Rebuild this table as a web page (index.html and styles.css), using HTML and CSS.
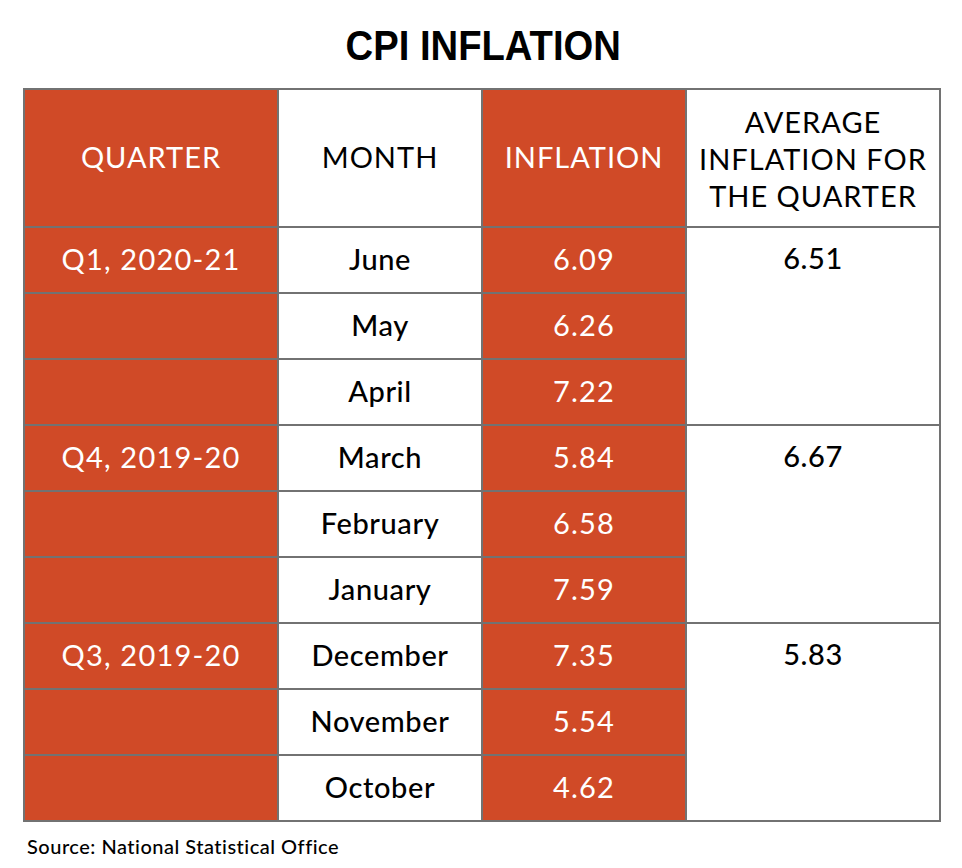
FILE: index.html
```html
<!DOCTYPE html>
<html lang="en">
<head>
<meta charset="utf-8">
<title>CPI Inflation</title>
<link rel="stylesheet" href="styles.css">
</head>
<body>
<main class="page">
  <h1 class="title"><span>CPI INFLATION</span></h1>
  <table class="cpi">
    <colgroup>
      <col class="c-quarter">
      <col class="c-month">
      <col class="c-infl">
      <col class="c-avg">
    </colgroup>
    <thead>
      <tr class="head">
        <th class="orange">QUARTER</th>
        <th>MONTH</th>
        <th class="orange">INFLATION</th>
        <th class="avg-head">AVERAGE<br>INFLATION FOR<br>THE QUARTER</th>
      </tr>
    </thead>
    <tbody>
      <tr>
        <td class="orange">Q1, 2020-21</td>
        <td>June</td>
        <td class="orange">6.09</td>
        <td class="avg" rowspan="3">6.51</td>
      </tr>
      <tr>
        <td class="orange"></td>
        <td>May</td>
        <td class="orange">6.26</td>
      </tr>
      <tr>
        <td class="orange"></td>
        <td>April</td>
        <td class="orange">7.22</td>
      </tr>
      <tr>
        <td class="orange">Q4, 2019-20</td>
        <td>March</td>
        <td class="orange">5.84</td>
        <td class="avg" rowspan="3">6.67</td>
      </tr>
      <tr>
        <td class="orange"></td>
        <td>February</td>
        <td class="orange">6.58</td>
      </tr>
      <tr>
        <td class="orange"></td>
        <td>January</td>
        <td class="orange">7.59</td>
      </tr>
      <tr>
        <td class="orange">Q3, 2019-20</td>
        <td>December</td>
        <td class="orange">7.35</td>
        <td class="avg" rowspan="3">5.83</td>
      </tr>
      <tr>
        <td class="orange"></td>
        <td>November</td>
        <td class="orange">5.54</td>
      </tr>
      <tr>
        <td class="orange"></td>
        <td>October</td>
        <td class="orange">4.62</td>
      </tr>
    </tbody>
  </table>
  <p class="source">Source: National Statistical Office</p>
</main>
</body>
</html>
```

FILE: styles.css
```css
html, body {
  margin: 0;
  padding: 0;
  background: #ffffff;
}

.page {
  width: 962px;
  height: 868px;
  box-sizing: border-box;
  padding: 22px 0 0 0;
  font-family: "Lato", "Liberation Sans", sans-serif;
  color: #000000;
}

.title {
  margin: 0;
  height: 48px;
  line-height: 48px;
  font-family: "Liberation Sans", "Arial", sans-serif;
  font-weight: 700;
  font-size: 42px;
  text-align: center;
  padding-left: 4px;
}

.title span {
  display: inline-block;
  transform: scaleX(0.91);
}

.cpi {
  margin: 18px 0 0 23px;
  border-collapse: collapse;
  table-layout: fixed;
  width: 918px;
}

.c-quarter { width: 254px; }
.c-month { width: 204px; }
.c-infl { width: 204px; }
.c-avg { width: 254px; }

.cpi th,
.cpi td {
  border: 2px solid #727272;
  padding: 0 0 3px 0;
  text-align: center;
  vertical-align: middle;
  font-size: 29px;
  line-height: 34px;
  letter-spacing: 0.6px;
  white-space: nowrap;
}

.cpi th {
  font-weight: 400;
  letter-spacing: 1px;
}

.cpi td {
  font-weight: 500;
}

.cpi td.orange {
  font-weight: 400;
  letter-spacing: 1.2px;
}

.head {
  height: 138px;
}

.cpi tbody tr {
  height: 66px;
}

.orange {
  background: #d04a27;
  color: #ffffff;
}

.cpi th.avg-head {
  line-height: 37px;
  padding-bottom: 0;
}

.cpi td.avg {
  vertical-align: top;
  padding-top: 13px;
}

.source {
  margin: 12px 0 0 27px;
  font-size: 20px;
  font-weight: 500;
  letter-spacing: 0.5px;
  line-height: 24px;
}
```
